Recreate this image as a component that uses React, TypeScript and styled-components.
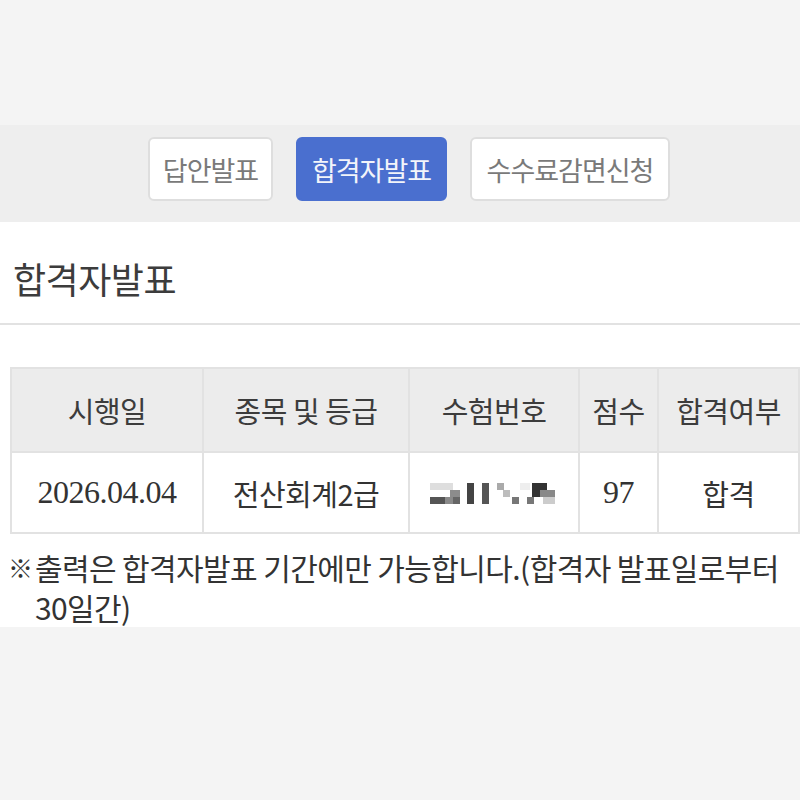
import React from "react";
import styled, { createGlobalStyle } from "styled-components";

const GlobalStyle = createGlobalStyle`
  body {
    margin: 0;
    background: #f4f4f4;
    font-family: "Noto Sans CJK KR", "Noto Sans", sans-serif;
    color: #3a3a3a;
    overflow: hidden;
  }
`;

const tabs = [
  { label: "답안발표", width: 125 },
  { label: "합격자발표", width: 151 },
  { label: "수수료감면신청", width: 200 },
];

const headers = [
  { label: "시행일", width: 190 },
  { label: "종목 및 등급", width: 204 },
  { label: "수험번호", width: 168 },
  { label: "점수", width: 77 },
  { label: "합격여부" },
];

// pixelated (blurred) exam number
const blocks: [number, number, number, number, string][] = [
  [0, 2, 23, 7, "#dedede"],
  [20, 9, 10, 8, "#8c8c8c"],
  [0, 16, 15, 7, "#555"],
  [15, 16, 8, 7, "#8a8a8a"],
  [23, 16, 7, 7, "#666"],
  [37, 2, 7, 21, "#444"],
  [52, 2, 7, 21, "#555"],
  [67, 2, 7, 7, "#aaa"],
  [73, 9, 7, 7, "#bdbdbd"],
  [82, 16, 7, 7, "#777"],
  [90, 2, 10, 7, "#eee"],
  [97, 16, 7, 7, "#777"],
  [102, 2, 15, 14, "#333"],
  [110, 9, 15, 7, "#888"],
  [113, 16, 12, 7, "#ccc"],
];

const App = () => {
  return (
    <>
      <GlobalStyle />
      <TopSpace />
      <TabBar>
        {tabs.map((t, i) => (
          <TabButton key={t.label} $active={i === 1} $w={t.width}>
            {t.label}
          </TabButton>
        ))}
      </TabBar>
      <Content>
        <Title>합격자발표</Title>
        <TableWrap>
          <Table>
            <thead>
              <tr>
                {headers.map((h) => (
                  <HeadCell key={h.label} style={h.width ? { width: h.width } : undefined}>
                    {h.label}
                  </HeadCell>
                ))}
              </tr>
            </thead>
            <tbody>
              <tr>
                <BodyCell $serif>2026.04.04</BodyCell>
                <BodyCell>전산회계2급</BodyCell>
                <BodyCell>
                  <svg width="125" height="24" viewBox="0 0 125 24">
                    {blocks.map(([x, y, w, h, c], i) => (
                      <rect key={i} x={x} y={y} width={w} height={h} fill={c} />
                    ))}
                  </svg>
                </BodyCell>
                <BodyCell $serif>97</BodyCell>
                <BodyCell>합격</BodyCell>
              </tr>
            </tbody>
          </Table>
        </TableWrap>
        <Note>
          <NoteMark>※</NoteMark>
          <NoteText>
            출력은 합격자발표 기간에만 가능합니다.(합격자 발표일로부터 30일간)
          </NoteText>
        </Note>
      </Content>
    </>
  );
};

export default App;

const TopSpace = styled.div`
  height: 125px;
  background: #f4f4f4;
`;

const TabBar = styled.div`
  height: 97px;
  box-sizing: border-box;
  background: #eeeeee;
  display: flex;
  justify-content: center;
  align-items: flex-start;
  gap: 23px;
  padding: 12px 0 0 18px;
`;

const TabButton = styled.div<{ $active?: boolean; $w: number }>`
  width: ${(p) => p.$w}px;
  height: 64px;
  box-sizing: border-box;
  display: flex;
  align-items: center;
  justify-content: center;
  border-radius: 6px;
  border: 2px solid ${(p) => (p.$active ? "#4a6fcf" : "#dedede")};
  background: ${(p) => (p.$active ? "#4a6fcf" : "#ffffff")};
  color: ${(p) => (p.$active ? "#f2f4fa" : "#7a7a7a")};
  font-size: 27px;
  letter-spacing: -1px;
  white-space: nowrap;
`;

const Content = styled.div`
  background: #ffffff;
`;

const Title = styled.h1`
  margin: 0;
  height: 103px;
  box-sizing: border-box;
  padding: 11px 0 0 13px;
  display: flex;
  align-items: center;
  font-size: 36px;
  font-weight: 400;
  color: #3c3c3c;
  letter-spacing: -0.5px;
  border-bottom: 2px solid #e2e2e2;
`;

const TableWrap = styled.div`
  padding: 42px 0 0 10px;
`;

const Table = styled.table`
  border-collapse: collapse;
  table-layout: fixed;
  width: 790px;
`;

const HeadCell = styled.th`
  height: 82px;
  padding: 0;
  background: #ececec;
  border: 2px solid #e2e2e2;
  font-size: 29px;
  font-weight: 400;
  color: #3c3c3c;
  text-align: center;
  letter-spacing: -0.5px;
`;

const BodyCell = styled.td<{ $serif?: boolean }>`
  height: 79px;
  padding: 0;
  border: 2px solid #e2e2e2;
  text-align: center;
  color: #333;
  font-size: ${(p) => (p.$serif ? "32px" : "29px")};
  font-family: ${(p) =>
    p.$serif ? '"Liberation Serif", "Noto Sans CJK KR", serif' : "inherit"};
  letter-spacing: -0.5px;

  svg {
    display: block;
    margin: 0 auto;
    transform: translateX(-2px);
  }
`;

const Note = styled.div`
  display: flex;
  align-items: flex-start;
  padding: 13px 10px 0 8px;
  font-size: 30px;
  line-height: 40px;
  color: #333;
`;

const NoteMark = styled.span`
  flex-shrink: 0;
  width: 27px;
  font-size: 25px;
`;

const NoteText = styled.span`
  letter-spacing: -0.6px;
`;
